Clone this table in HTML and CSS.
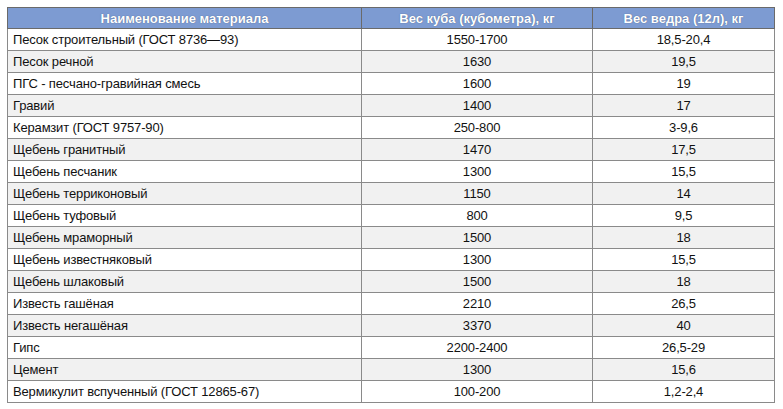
FILE: index.html
```html
<!DOCTYPE html>
<html lang="ru">
<head>
<meta charset="utf-8">
<title>Вес строительных материалов</title>
<link rel="stylesheet" href="styles.css">
</head>
<body>
<table class="mat-table">
  <colgroup>
    <col class="c1">
    <col class="c2">
    <col class="c3">
  </colgroup>
  <thead>
    <tr><th>Наименование материала</th><th>Вес куба (кубометра), кг</th><th>Вес ведра (12л), кг</th></tr>
  </thead>
  <tbody>
    <tr><td>Песок строительный (ГОСТ 8736—93)</td><td>1550-1700</td><td>18,5-20,4</td></tr>
    <tr><td>Песок речной</td><td>1630</td><td>19,5</td></tr>
    <tr><td>ПГС - песчано-гравийная смесь</td><td>1600</td><td>19</td></tr>
    <tr><td>Гравий</td><td>1400</td><td>17</td></tr>
    <tr><td>Керамзит (ГОСТ 9757-90)</td><td>250-800</td><td>3-9,6</td></tr>
    <tr><td>Щебень гранитный</td><td>1470</td><td>17,5</td></tr>
    <tr><td>Щебень песчаник</td><td>1300</td><td>15,5</td></tr>
    <tr><td>Щебень терриконовый</td><td>1150</td><td>14</td></tr>
    <tr><td>Щебень туфовый</td><td>800</td><td>9,5</td></tr>
    <tr><td>Щебень мраморный</td><td>1500</td><td>18</td></tr>
    <tr><td>Щебень известняковый</td><td>1300</td><td>15,5</td></tr>
    <tr><td>Щебень шлаковый</td><td>1500</td><td>18</td></tr>
    <tr><td>Известь гашёная</td><td>2210</td><td>26,5</td></tr>
    <tr><td>Известь негашёная</td><td>3370</td><td>40</td></tr>
    <tr><td>Гипс</td><td>2200-2400</td><td>26,5-29</td></tr>
    <tr><td>Цемент</td><td>1300</td><td>15,6</td></tr>
    <tr><td>Вермикулит вспученный (ГОСТ 12865-67)</td><td>100-200</td><td>1,2-2,4</td></tr>
  </tbody>
</table>
</body>
</html>
```
FILE: styles.css
```css
html, body {
  margin: 0;
  padding: 0;
  background: #ffffff;
}
body {
  padding: 7px;
  font-family: "Liberation Sans", Arial, sans-serif;
  font-size: 13px;
  color: #111111;
}
.mat-table {
  border-collapse: collapse;
  width: 767px;
  table-layout: fixed;
}
.c1 { width: 354px; }
.c2 { width: 231px; }
.c3 { width: 182px; }
.mat-table th,
.mat-table td {
  border: 1px solid #8a8a8a;
  padding: 0 5px;
  line-height: 15px;
  white-space: nowrap;
}
.mat-table th {
  height: 20px;
  background: #7d9bd2;
  color: #ffffff;
  font-weight: bold;
  text-align: center;
  text-shadow: 0 0 1px #44577a;
  border-color: #6a6a6a;
}
.mat-table td {
  height: 21px;
  text-align: center;
  letter-spacing: -0.15px;
}
.mat-table td:first-child {
  text-align: left;
}
.mat-table tbody tr:nth-child(even) td {
  background: #f1f1f1;
}
```
